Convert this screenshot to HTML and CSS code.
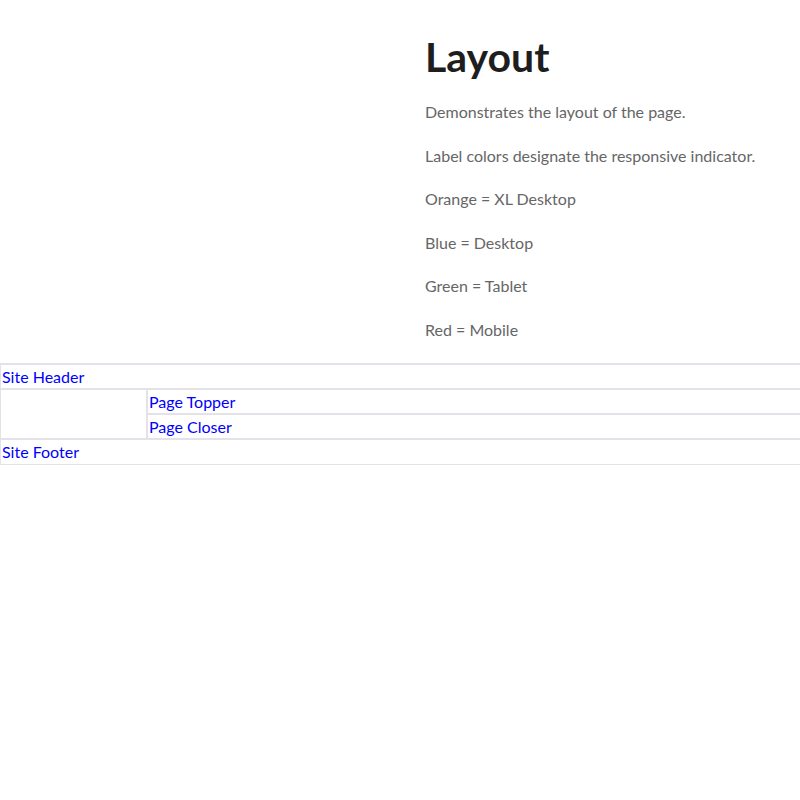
FILE: index.html
```html
<!DOCTYPE html>
<html lang="en">
<head>
<meta charset="utf-8">
<title>Layout</title>
<link rel="stylesheet" href="styles.css">
</head>
<body>
<section class="intro">
  <div class="intro-spacer"></div>
  <div class="intro-text">
    <h1 class="title">Layout</h1>
    <p class="desc">Demonstrates the layout of the page.</p>
    <p class="desc">Label colors designate the responsive indicator.</p>
    <p class="desc">Orange = XL Desktop</p>
    <p class="desc">Blue = Desktop</p>
    <p class="desc">Green = Tablet</p>
    <p class="desc">Red = Mobile</p>
  </div>
</section>
<div class="layout">
  <div class="box">Site Header</div>
  <div class="middle">
    <div class="side"></div>
    <div class="main">
      <div class="box">Page Topper</div>
      <div class="box">Page Closer</div>
    </div>
  </div>
  <div class="box footer">Site Footer</div>
</div>
</body>
</html>
```
FILE: styles.css
```css
html, body {
  margin: 0;
  padding: 0;
  background: #fff;
}
body {
  font-family: Lato, "Noto Sans", sans-serif;
  font-size: 16px;
}
.intro {
  display: grid;
  grid-template-columns: 425px 1fr;
  padding-top: 33px;
}
.title {
  margin: 0 0 19px 0;
  font-size: 41px;
  line-height: 48px;
  font-weight: 700;
  color: #1e1e1e;
}
.desc {
  margin: 0 0 19.6px 0;
  line-height: 24px;
  color: #666;
}
.intro-text .desc:last-child {
  margin-bottom: 21px;
}
.layout {
  border-top: 1px solid #e2e2e8;
  width: 820px;
}
.box {
  border: 1px solid #e2e2e8;
  padding: 0 1px;
  line-height: 23px;
  font-size: 16px;
  color: #0000ff;
}
.middle {
  display: flex;
}
.side {
  width: 145px;
  border: 1px solid #e2e2e8;
}
.main {
  flex: 1;
}
.footer {
  line-height: 24px;
}
```
